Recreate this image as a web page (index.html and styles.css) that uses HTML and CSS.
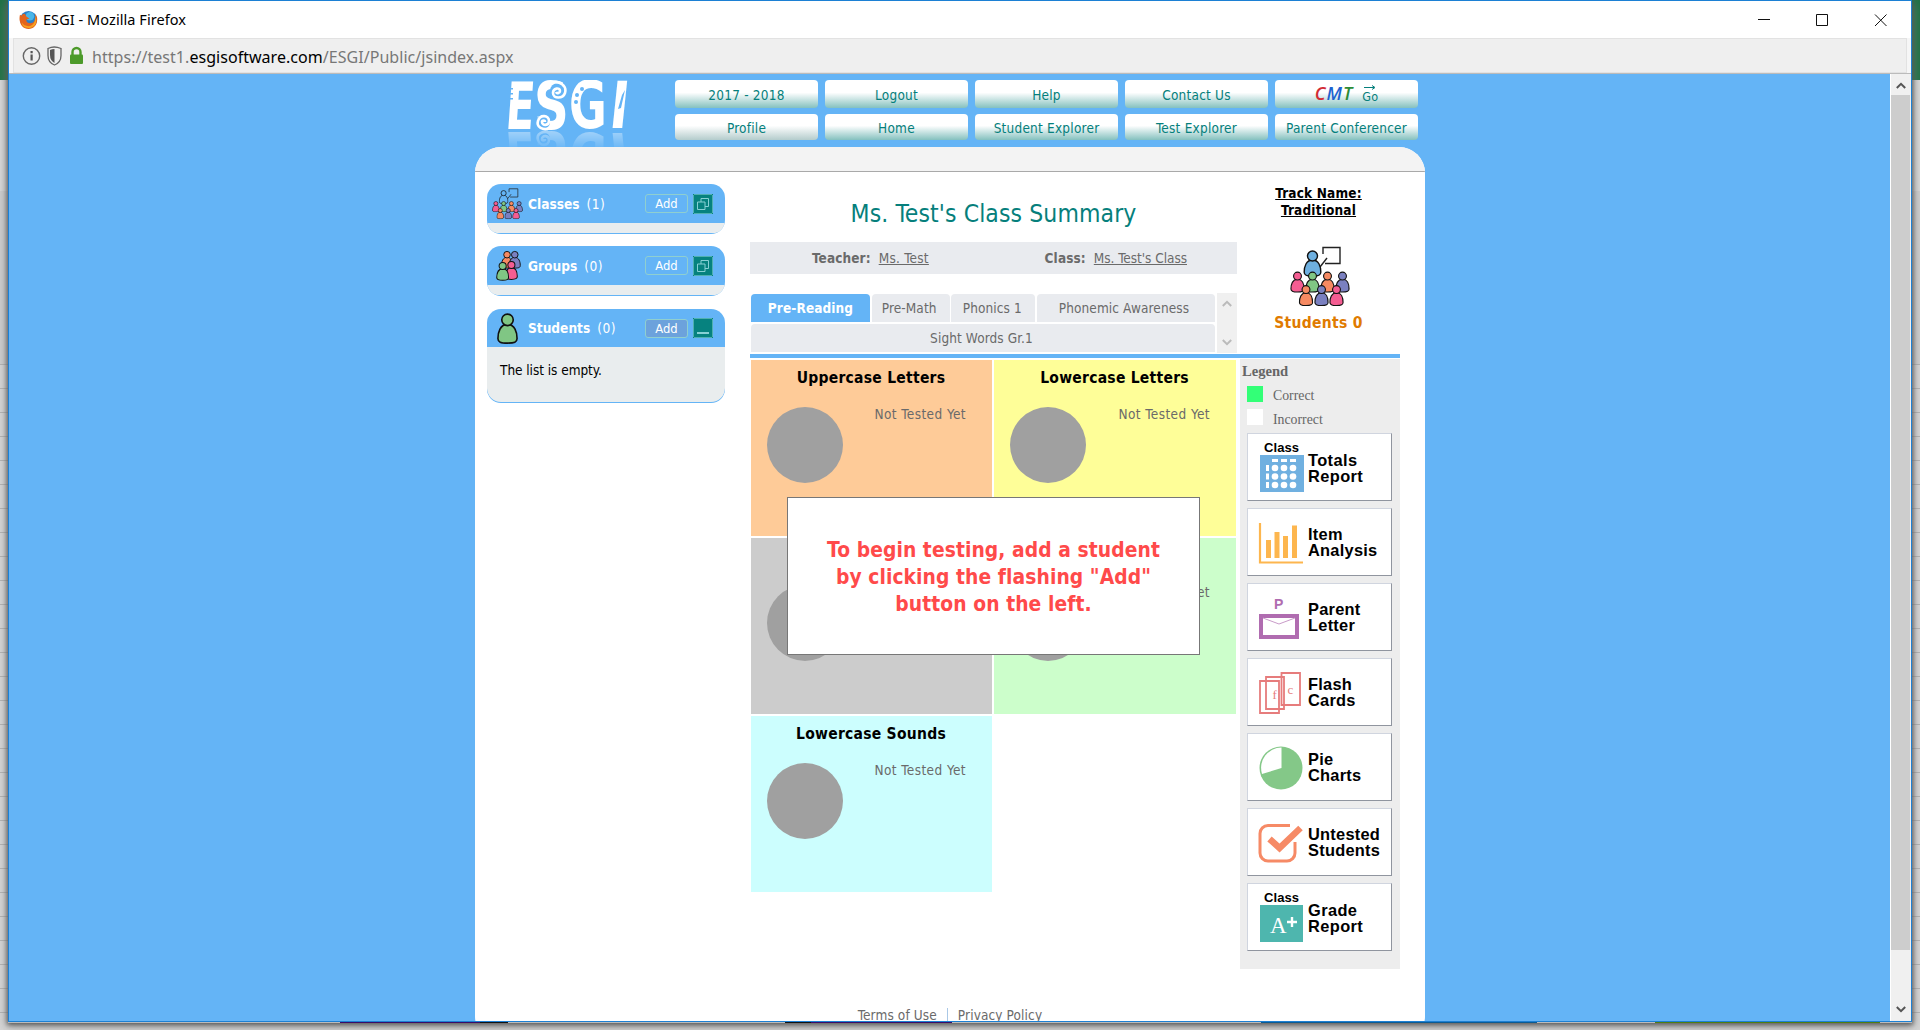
FILE: index.html
```html
<!DOCTYPE html>
<html lang="en">
<head>
<meta charset="utf-8">
<title>ESGI</title>
<link rel="stylesheet" href="styles.css">
</head>
<body>
<svg class="defs" width="0" height="0" aria-hidden="true">
  <defs>
    <symbol id="person" viewBox="0 0 24 34">
      <path d="M12 12.500C4 12.500 1.500 21 1.500 28c0 4 3 5 10.500 5s10.500-1 10.500-5c0-7-2.500-15.500-10.500-15.500z" stroke="#111" stroke-width="1.800"/>
      <circle cx="12" cy="7.500" r="6.300" stroke="#111" stroke-width="1.800"/>
    </symbol>
    <symbol id="classroom" viewBox="0 0 60 60">
      <path d="M33 8V1.500h17v16H35" fill="none" stroke="#222" stroke-width="1.400"/>
      <path d="M30 21l7-9" stroke="#222" stroke-width="1.400"/>
      <use class="teacher" href="#person" x="13" y="4" width="19" height="27"/>
      <use href="#person" x="0" y="25" width="15" height="22" fill="#f45d92"/>
      <use href="#person" x="15" y="25" width="15" height="22" fill="#80c684"/>
      <use href="#person" x="30" y="25" width="15" height="22" fill="#f68a62"/>
      <use href="#person" x="45" y="25" width="15" height="22" fill="#7a80c0"/>
      <use href="#person" x="8.500" y="38.500" width="15" height="22" fill="#f68a62"/>
      <use href="#person" x="24" y="38.500" width="15" height="22" fill="#7a80c0"/>
      <use href="#person" x="39" y="38.500" width="15" height="22" fill="#f45d92"/>
    </symbol>
    <symbol id="restore" viewBox="0 0 20 20">
      <rect x=".5" y=".5" width="19" height="19" fill="#06827f" stroke="#4fb0b0"/>
      <path d="M0 0h1v1H0zM19 0h1v1h-1zM0 19h1v1H0zM19 19h1v1h-1z" fill="#06827f"/>
      <path d="M8 8V4.500h7.500v8H12M4.500 8h7.500v7.500H4.500z" fill="none" stroke="#86d0d4"/>
    </symbol>
    <linearGradient id="fade" x1="0" y1="0" x2="0" y2="1">
      <stop offset="0" stop-color="#fff" stop-opacity=".42"/>
      <stop offset="1" stop-color="#fff" stop-opacity=".05"/>
    </linearGradient>
    <mask id="fadeMask" maskUnits="userSpaceOnUse" x="0" y="50" width="130" height="18"><rect x="0" y="50" width="130" height="18" fill="url(#fade)"/></mask>
    <g id="esgi">
      <g font-family="DejaVu Sans Condensed, DejaVu Sans, sans-serif" font-weight="700" font-size="65" fill="#fff">
        <text x="1" y="49" textLength="29" lengthAdjust="spacingAndGlyphs" transform="skewX(-4) translate(3 0)">E</text>
        <text x="30" y="49" textLength="35" lengthAdjust="spacingAndGlyphs">S</text>
        <text x="65" y="48" textLength="38" lengthAdjust="spacingAndGlyphs">G</text>
        <text x="106" y="48" textLength="19" lengthAdjust="spacingAndGlyphs" transform="skewX(-6) translate(3 0)">I</text>
      </g>
      <circle cx="54" cy="11" r="8" fill="#64b4f6"/>
      <circle cx="39" cy="42" r="7" fill="#64b4f6"/>
      <path d="M47 3c9-3 16 3 14 10-2 6-12 6-12 0 0-5 7-6 7-2 0 2-3 3-4 1" fill="none" stroke="#fff" stroke-width="2.600"/>
      <path d="M46 48c-7 3-14-1-12-7 2-7 11-6 11 0 0 5-7 5-7 1 0-2 3-2 3 0" fill="none" stroke="#fff" stroke-width="2.600"/>
      <g fill="#64b4f6"><circle cx="73" cy="15" r="2"/><circle cx="78" cy="9" r="2"/><circle cx="72" cy="22" r="2"/><path d="M2 8h7v1.500H2zM2 13h7v1.500H2zM2 18h7v1.500H2zM121 10l-4 18-3 1 4-14z"/></g>
    </g>
  </defs>
</svg>

<div class="desktop">
  <div class="window">
    <header class="titlebar">
      <svg class="firefox" viewBox="0 0 20 20"><circle cx="10" cy="10" r="9" fill="#2b7fc6"/><circle cx="11.500" cy="6.500" r="4.500" fill="#49b6e8"/><path d="M1 5C-1 14 4 20 10 20s10-5 9-12c-1-3-2-4-2-4 1 6-1 10-5 10-3 0-5-2-4-4l3-1-3-2-2-3c-2 0-3 1-3 2L1 5z" fill="#e4641c"/><path d="M17 5c1 7-2 12-7 12-3 0-6-1-7-4 0 4 3 6 7 6s9-3 8-9z" fill="#f7a21e"/></svg>
      <span class="window-title">ESGI - Mozilla Firefox</span>
      <svg class="controls" viewBox="0 0 130 12"><path d="M0 5.500h12M58.500.5h11v11h-11zM117 .5l11.500 11.500M128.500.5L117 12" fill="none" stroke="#111" stroke-width="1"/></svg>
    </header>
    <div class="urlbar">
      <div class="urlbox">
        <svg viewBox="0 0 62 22" class="security"><circle cx="9.500" cy="11" r="8.200" fill="none" stroke="#666" stroke-width="1.400"/><path d="M8.500 9.500h2.200v6H8.500zM8.500 6h2.200v2.200H8.500z" fill="#555"/><path d="M26 3.500q6-3 13 0v7q0 7-6.500 9.500Q26 17.500 26 10.500z" fill="none" stroke="#666" stroke-width="1.300"/><path d="M28 5q2-1 4.500-1v14Q28 15.500 28 10z" fill="#555"/><path d="M50.500 10V7a4 4 0 0 1 8 0v3" fill="none" stroke="#4c9a2a" stroke-width="2.400"/><rect x="48" y="9.500" width="13" height="9.500" rx="1" fill="#4c9a2a"/></svg>
        <span class="url">https://test1.<b>esgisoftware.com</b>/ESGI/Public/jsindex.aspx</span>
      </div>
    </div>
    <div class="viewport">
      <main class="page">
        <div class="site">
          <div class="masthead">
            <svg class="logo" viewBox="0 0 130 68"><use href="#esgi"/><g mask="url(#fadeMask)"><use href="#esgi" transform="translate(0 101) scale(1 -1)"/></g></svg>
            <nav class="menu">
              <a>2017 - 2018</a><a>Logout</a><a>Help</a><a>Contact Us</a>
              <a class="cmt"><i class="c">C</i><i class="m">M</i><i class="t">T</i><span class="go"><svg viewBox="0 0 12 5"><path d="M0 2.500h10M8 .5l3 2-3 2" fill="none" stroke="#067f7c"/></svg><span>Go</span></span></a>
              <a class="plain">Profile</a><a>Home</a><a>Student Explorer</a><a>Test Explorer</a><a>Parent Conferencer</a>
            </nav>
          </div>
          <div class="panel">
            <div class="panel-top"></div>
            <div class="columns">
              <aside class="sidebar">
                <section class="card">
                  <h3><svg class="ic classes"><use href="#classroom"/></svg><b>Classes</b><span class="count">(1)</span><button>Add</button><svg class="toggle"><use href="#restore"/></svg></h3>
                  <div class="card-body"></div>
                </section>
                <section class="card">
                  <h3><svg class="ic" viewBox="0 0 32 34"><use href="#person" x="9" y="1" width="13" height="20" fill="#f68a62"/><use href="#person" x="17" y="1" width="13" height="20" fill="#7a80c0"/><use href="#person" x="13" y="12" width="14" height="20" fill="#f45d92"/><use href="#person" x="4" y="13" width="14" height="20" fill="#80c684"/></svg><b>Groups</b><span class="count">(0)</span><button>Add</button><svg class="toggle"><use href="#restore"/></svg></h3>
                  <div class="card-body"></div>
                </section>
                <section class="card students">
                  <h3><svg class="ic" viewBox="0 0 32 34"><use href="#person" x="4" y="1" width="24" height="32" fill="#80c684"/></svg><b>Students</b><span class="count">(0)</span><button class="flash">Add</button><svg class="toggle" viewBox="0 0 20 20"><rect x=".5" y=".5" width="19" height="19" fill="#06827f" stroke="#4fb0b0"/><path d="M0 0h1v1H0zM19 0h1v1h-1zM0 19h1v1H0zM19 19h1v1h-1z" fill="#06827f"/><path d="M4 15h12" stroke="#86d0d4" stroke-width="2"/></svg></h3>
                  <div class="card-body">The list is empty.</div>
                </section>
              </aside>

              <div class="content">
                <div class="summary">
                  <div class="summary-main">
                    <h1>Ms. Test's Class Summary</h1>
                    <div class="facts"><span><b>Teacher:</b><u>Ms. Test</u></span><span><b>Class:</b><u>Ms. Test's Class</u></span></div>
                    <div class="tabs">
                      <div class="tab-list">
                        <div class="tab-row"><span class="tab active t1">Pre-Reading</span><span class="tab t2">Pre-Math</span><span class="tab t3">Phonics 1</span><span class="tab t4">Phonemic Awareness</span></div>
                        <div class="tab-row"><span class="tab wide">Sight Words Gr.1</span></div>
                      </div>
                      <div class="spinner"><svg viewBox="0 0 10 7"><path d="M.8 6L5 1.800 9.200 6" fill="none" stroke="#bbb" stroke-width="2"/></svg><svg viewBox="0 0 10 7"><path d="M.8 1L5 5.200 9.200 1" fill="none" stroke="#bbb" stroke-width="2"/></svg></div>
                    </div>
                  </div>
                  <div class="track">
                    <a class="track-name">Track Name:<br>Traditional</a>
                    <svg class="track-icon"><use href="#classroom"/></svg>
                    <b class="student-count">Students 0</b>
                  </div>
                </div>
                <div class="board">
                  <div class="tiles">
                    <div class="tile orange"><h2>Uppercase Letters</h2><div class="result"><i class="pie"></i><span>Not Tested Yet</span></div></div>
                    <div class="tile yellow"><h2>Lowercase Letters</h2><div class="result"><i class="pie"></i><span>Not Tested Yet</span></div></div>
                    <div class="tile gray"><h2></h2><div class="result"><i class="pie"></i></div></div>
                    <div class="tile green"><h2></h2><div class="result"><i class="pie"></i><span>Not Tested Yet</span></div></div>
                    <div class="tile cyan"><h2>Lowercase Sounds</h2><div class="result"><i class="pie"></i><span>Not Tested Yet</span></div></div>
                    <div class="hint">To begin testing, add a student<br>by clicking the flashing "Add"<br>button on the left.</div>
                  </div>
                  <div class="legend">
                    <h4>Legend</h4>
                    <p><i class="swatch ok"></i>Correct</p>
                    <p><i class="swatch"></i>Incorrect</p>
                    <div class="reports">
                      <a class="report low"><svg viewBox="0 0 48 66"><text class="cap" x="4" y="18" textLength="35">Class</text><rect y="21" width="44" height="37" fill="#70b0e0"/><g fill="#fff"><path d="M12 25h6v3h-6zM21 25h6v3h-6zM30 25h6v3h-6zM6 31h3v6H6zM6 39.500h3v6H6zM6 48h3v6H6z"/><circle cx="15" cy="34" r="3.300"/><circle cx="24" cy="34" r="3.300"/><circle cx="33" cy="34" r="3.300"/><circle cx="15" cy="42.500" r="3.300"/><circle cx="24" cy="42.500" r="3.300"/><circle cx="33" cy="42.500" r="3.300"/><circle cx="15" cy="51" r="3.300"/><circle cx="24" cy="51" r="3.300"/><circle cx="33" cy="51" r="3.300"/></g></svg><span>Totals<br>Report</span></a>
                      <a class="report"><svg viewBox="0 0 48 66"><path d="M0 14v39.500h43" fill="none" stroke="#fdb64e" stroke-width="2.200"/><path d="M6 31h5v18H6zM14.500 23h5v26h-5zM23 27h5v22h-5zM32 16.500h5V49h-5z" fill="#fdb64e"/></svg><span>Item<br>Analysis</span></a>
                      <a class="report"><svg viewBox="0 0 48 66"><text x="14" y="25" font-size="14" font-weight="700" fill="#b06cb0">P</text><rect x="1" y="32" width="36" height="21" fill="#fff" stroke="#b06cb0" stroke-width="4"/><path d="M3 34l16 6 16-6" fill="none" stroke="#c99bc9"/></svg><span>Parent<br>Letter</span></a>
                      <a class="report"><svg viewBox="0 0 48 66"><g fill="#fff" stroke="#e67c7c" stroke-width="1.800"><path d="M0 22h19v32H0zM6 18h18v32H6zM21.500 14H40v32H21.500z"/></g><g font-family="Liberation Serif" font-weight="400" font-size="13" fill="#e67c7c"><text x="12.500" y="40">f</text><text x="27.500" y="35">c</text></g></svg><span>Flash<br>Cards</span></a>
                      <a class="report"><svg viewBox="0 0 48 66"><circle cx="21" cy="34" r="21.500" fill="#84c888"/><path d="M21.500 34V13.500A20.500 20.500 0 0 0 2 40z" fill="#fff"/></svg><span>Pie<br>Charts</span></a>
                      <a class="report"><svg viewBox="0 0 48 66"><path d="M30 16.500H8a8 8 0 0 0-8 8V44a8 8 0 0 0 8 8h19a8 8 0 0 0 8-8V33" fill="none" stroke="#f68a66" stroke-width="3"/><path d="M9.500 30l10 9L40.500 19" fill="none" stroke="#f68a66" stroke-width="6.500"/></svg><span>Untested<br>Students</span></a>
                      <a class="report low"><svg viewBox="0 0 48 66"><text class="cap" x="4" y="18" textLength="35">Class</text><rect y="21" width="43" height="37" fill="#4eb6ae"/><text x="10" y="49" font-family="Liberation Serif" font-weight="400" font-size="23" fill="#fff">A</text><path d="M27 38h10M32 33v10" stroke="#fff" stroke-width="2.400"/></svg><span>Grade<br>Report</span></a>
                    </div>
                  </div>
                </div>
              </div>
            </div>
            <footer class="foot"><a>Terms of Use</a><i></i><a>Privacy Policy</a></footer>
          </div>
        </div>
      </main>
      <div class="scrollbar"><svg viewBox="0 0 10 7"><path d="M.8 6L5 1.800 9.200 6" fill="none" stroke="#555" stroke-width="2"/></svg><div class="thumb"></div><svg viewBox="0 0 10 7"><path d="M.8 1L5 5.200 9.200 1" fill="none" stroke="#555" stroke-width="2"/></svg></div>
    </div>
  </div>
  <div class="behind"></div>
</div>
</body>
</html>
```
FILE: styles.css
```css
* { box-sizing: border-box; }
body { margin: 0; width: 1920px; height: 1030px; overflow: hidden; font-family: "DejaVu Sans Condensed", "DejaVu Sans", sans-serif; font-stretch: condensed; font-size: 13.5px; letter-spacing: .22px; color: #6a6a6a; }
.defs { position: absolute; }
h1, h2, h3, h4, p { margin: 0; font-weight: normal; }
svg { display: block; flex: none; }

.desktop { height: 1030px; padding: 0 8px; background: linear-gradient(#1f7145 0 80px, #d9d9d9 80px 191px, #cfcfcf 191px 364px, transparent 364px), repeating-linear-gradient(#d6d6d6 0 23px, #b4b4b4 23px 24px); background-position: 0 0, 0 5px; }
.window { height: 1022px; border: 1px solid #1c80d4; background: #fff; display: flex; flex-direction: column; box-shadow: 0 2px 5px 1px #555, 0 4px 12px 1px #8888; }
.behind { position: relative; height: 1px; background: linear-gradient(90deg, #bbb 332px, #3a0a66 332px 472px, #111 472px 500px, #bbb 500px 777px, #111 777px 803px, #3a0a66 803px 944px, #bbb 944px 1253px, #0a5a92 1253px 1529px, #bbb 1529px 1647px, #4f7d10 1647px 1872px, #bbb 1872px); }

.titlebar { height: 37px; display: flex; align-items: center; padding-left: 10px; font-family: "Noto Sans", sans-serif; font-size: 14.5px; color: #000; }
.firefox { width: 19px; height: 19px; }
.window-title { margin: -2px 0 0 5px; letter-spacing: .06px; }
.controls { width: 130px; height: 12px; margin-left: auto; margin-right: 23px; }
.urlbar { height: 36px; padding: 0 4px; background: #f6f6f6; border-bottom: 1px solid #bbb; }
.urlbox { height: 35px; border: 1px solid #e2e2e2; background: #efefef; display: flex; align-items: center; padding: 2px 0 0 8px; }
.security { width: 62px; height: 22px; margin-top: -2px; }
.url { margin-left: 8px; font-family: "Noto Sans", sans-serif; font-size: 16px; color: #777; letter-spacing: .04px; }
.url b { font-weight: normal; color: #000; }

.viewport { flex: 1; min-height: 0; display: flex; }
.page { flex: 1; overflow: hidden; background: #64b4f6; }
.scrollbar { width: 21px; border-left: 1px solid #fff; padding: 8px 1px 8px 0; background: #f0f0f0; display: flex; flex-direction: column; align-items: center; }
.scrollbar svg { width: 10px; height: 7px; }
.thumb { width: 19px; height: 855px; margin: 6px 0 auto; background: #cdcdcd; }

.site { width: 950px; margin-left: 466px; }
.masthead { height: 73px; display: flex; padding: 6px 0 0 29px; }
.logo { width: 130px; height: 68px; }
.menu { margin-left: 41px; display: grid; grid-template-columns: repeat(5, 143px); grid-template-rows: 28px 26px; gap: 6px 7px; align-content: start; }
.menu a { display: flex; align-items: center; justify-content: center; padding-top: 2px; color: #067f7c; border-radius: 4px; background: linear-gradient(#fff 45%, #85c1bf); }
.menu .plain { background: linear-gradient(#fff 45%, #b4cccc); }
.cmt i { font: italic 600 18px/20px "Open Sans", sans-serif; letter-spacing: 1px; margin-top: -4px; }
.cmt .c { color: #d22c35; } .cmt .m { color: #1d62cf; } .cmt .t { color: #2d8b35; }
.go { margin-left: 9px; font-size: 12.5px; line-height: 13px; display: flex; flex-direction: column; align-items: center; }
.go svg { width: 12px; height: 5px; margin-top: -3px; }

.panel { height: 888px; background: #fff; border-radius: 26px 26px 18px 18px; overflow: hidden; }
.panel-top { height: 25px; background: #f3f3f3; border-bottom: 1px solid #a9a9a9; }
.columns { display: flex; height: 829px; padding-left: 12px; }
.sidebar { width: 238px; padding-top: 12px; display: flex; flex-direction: column; gap: 12px; }
.card { height: 50px; border-radius: 14px; overflow: hidden; background: #64b4f6; padding-bottom: 1px; display: flex; flex-direction: column; }
.card h3 { height: 39px; display: flex; align-items: center; padding: 0 12px 0 5px; color: #fff; font-size: 13.6px; }
.card-body { flex: 1; background: #e9edee; border-radius: 0 0 14px 14px; color: #000; }
.students { height: 94px; margin-top: 1px; }
.students h3 { height: 38px; }
.students .card-body { padding: 15px 13px; letter-spacing: -.04px; }
.ic { width: 31px; height: 33px; }
.classes .teacher, .classes { fill: #64b4f6; }
.card h3 b { margin-left: 5px; letter-spacing: 0; }
.count { margin-left: 7px; letter-spacing: .5px; }
.card button { margin-left: auto; width: 43px; height: 19px; padding: 0; border: 1px solid #8fcfcf; border-radius: 3px; background: none; color: #fff; font: 12.9px "DejaVu Sans Condensed", "DejaVu Sans", sans-serif; letter-spacing: 0; }
.card .flash { background: #6ca2dc; }
.toggle { width: 20px; height: 20px; margin-left: 5px; }

.content { width: 650px; margin-left: 25px; }
.summary { height: 186px; display: flex; border-bottom: 4px solid #64b4f6; }
.summary-main { width: 487px; }
h1 { height: 70px; padding-top: 25px; text-align: center; font-size: 24.5px; line-height: 34px; letter-spacing: .1px; color: #067f7c; }
.facts { height: 32px; display: flex; justify-content: space-between; align-items: center; padding: 0 50px 0 62px; background: #e9ebef; }
.facts b { margin-right: 8px; letter-spacing: .1px; }
.facts u { letter-spacing: -.03px; }
.facts span:first-child u { letter-spacing: .25px; }
.tabs { display: flex; margin-top: 19px; justify-content: space-between; padding-left: 1px; }
.tab-list { width: 464px; padding-top: 1px; display: flex; flex-direction: column; gap: 2px; }
.tab-row { display: flex; justify-content: space-between; }
.tab { height: 28px; line-height: 29px; text-align: center; background: #e9ebef; border-radius: 4px 4px 0 0; letter-spacing: .1px; }
.active { background: #64b4f6; color: #fff; font-weight: bold; }
.t1 { width: 119px; } .t2 { width: 78px; padding-right: 3px; } .t3 { width: 84px; padding-right: 2px; } .t4 { width: 178px; padding-right: 4px; } .wide { width: 464px; padding-right: 3px; }
.spinner { width: 20px; height: 60px; padding: 7px 5px; background: #f0f0f0; display: flex; flex-direction: column; justify-content: space-between; }
.spinner svg { width: 10px; height: 7px; }
.track { flex: 1; display: flex; flex-direction: column; align-items: center; padding-top: 13px; }
.track-name { color: #000; font-weight: bold; text-decoration: underline; text-align: center; line-height: 17px; letter-spacing: .18px; }
.track-icon { width: 60px; height: 62px; margin: 26px 0 0 2px; fill: #6eb0e0; }
.student-count { color: #e07b00; font-size: 15.5px; line-height: 18px; margin-top: 7px; letter-spacing: .3px; }

.board { display: flex; justify-content: space-between; }
.tiles { position: relative; width: 487px; padding: 2px 1px 0; display: grid; grid-template-columns: 241px 242px; grid-auto-rows: 176px; gap: 2px; align-content: start; }
.orange { background: #fecb98; } .yellow { background: #fefe98; } .gray { background: #ccc; } .green { background: #ccfecb; } .cyan { background: #ccfefe; }
h2 { height: 46px; padding: 8px 1px 0 0; text-align: center; font-size: 15.5px; line-height: 21px; font-weight: bold; color: #000; letter-spacing: .26px; }
.result { display: flex; justify-content: space-between; padding: 1px 26px 0 16px; }
.result span { margin-top: -1px; letter-spacing: .42px; }
.pie { width: 76px; height: 76px; border-radius: 50%; background: #a0a0a0; }
.hint { position: absolute; left: 37px; top: 139px; width: 413px; height: 158px; background: #fff; border: 1px solid #777; padding-top: 39px; text-align: center; color: #ff4a4a; font-size: 20.8px; line-height: 27px; font-weight: bold; letter-spacing: .08px; }
.legend { width: 160px; height: 610px; margin-top: 1px; padding-left: 7px; background: #ededed; font-family: "Liberation Serif", serif; font-size: 13.8px; letter-spacing: 0; color: #666; }
.legend h4 { height: 26px; margin-left: -5px; font-size: 14.6px; line-height: 25px; font-weight: bold; }
.legend p { height: 24px; display: flex; line-height: 22px; }
.swatch { width: 16px; height: 16px; margin: 0 10px 0 0; background: #fff; }
.ok { background: #33ff77; margin-top: 1px; }
.reports { display: flex; flex-direction: column; gap: 7px; }
.report { width: 145px; height: 68px; border: 1px solid #d0d5df; border-right-color: #90959f; border-bottom-color: #90959f; background: #fff; display: flex; align-items: center; padding-left: 12px; color: #000; font: bold 16.4px/15.3px "Liberation Sans", sans-serif; white-space: nowrap; }
.report svg { width: 48px; height: 66px; overflow: visible; }
.report span { padding-top: 1px; letter-spacing: .25px; }
.report.low span { padding-top: 3px; letter-spacing: .4px; }
.cap { font-size: 13px; fill: #000; }
.foot { display: flex; justify-content: center; align-items: center; gap: 10px; padding: 3px 0 0; height: 24px; letter-spacing: .12px; }
.foot i { width: 1px; height: 13px; background: #aac8e6; }
```
